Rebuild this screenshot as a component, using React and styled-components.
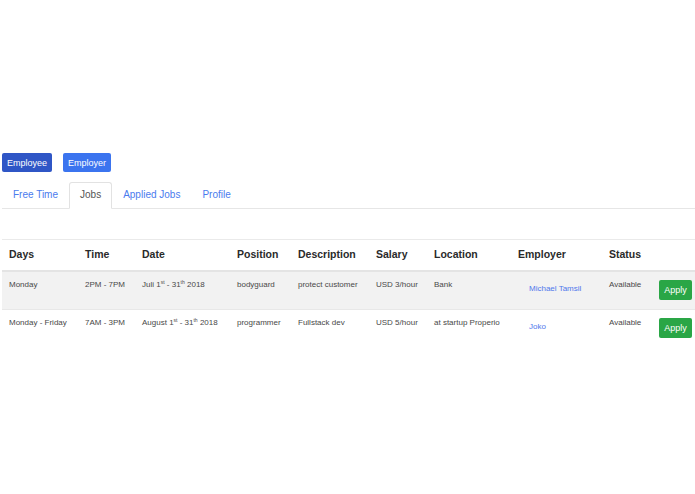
import React, { useState } from 'react';
import styled, { createGlobalStyle } from 'styled-components';

const GlobalStyle = createGlobalStyle`
  body {
    margin: 0;
    background: #fff;
    font-family: "Liberation Sans", Arial, sans-serif;
    color: #333;
  }
`;

const Page = styled.div`
  padding: 153px 0 0 2px;
`;

const RoleBar = styled.div`
  display: flex;
  gap: 11px;
`;

const RoleButton = styled.button`
  height: 19px;
  padding: 0 5px;
  border: none;
  border-radius: 2px;
  background: ${({ active }) => (active ? '#2f56c6' : '#3b74ef')};
  color: #fff;
  font-family: inherit;
  font-size: 9px;
  cursor: pointer;
`;

const Tabs = styled.div`
  display: flex;
  margin-top: 10px;
  border-bottom: 1px solid #e6e6e6;
  height: 26px;
`;

const Tab = styled.div`
  padding: 0 10px 2px;
  display: flex;
  align-items: center;
  font-size: 10px;
  color: ${({ active }) => (active ? '#555' : '#4a7bee')};
  border: 1px solid ${({ active }) => (active ? '#e2e2e2' : 'transparent')};
  border-bottom: ${({ active }) => (active ? '1px solid #fff' : 'none')};
  border-radius: 3px 3px 0 0;
  background: ${({ active }) => (active ? '#fff' : 'transparent')};
  margin-bottom: ${({ active }) => (active ? '-1px' : '0')};
  height: ${({ active }) => (active ? 27 : 26)}px;
  box-sizing: border-box;
  cursor: pointer;
`;

const Table = styled.table`
  margin-top: 30px;
  width: 693px;
  table-layout: fixed;
  border-collapse: collapse;
  border-top: 1px solid #eaeaea;
`;

const Th = styled.th`
  text-align: left;
  font-size: 10.5px;
  font-weight: bold;
  color: #2a2a2a;
  height: 27px;
  padding: 0 0 3px 7px;
  border-bottom: 2px solid #e4e4e4;
  vertical-align: middle;
`;

const Row = styled.tr`
  background: ${({ striped }) => (striped ? '#f2f2f2' : '#fff')};
  border-bottom: 1px solid ${({ last }) => (last ? 'transparent' : '#e8e8e8')};
  height: 38px;
`;

const Td = styled.td`
  font-size: 8px;
  color: #484848;
  padding: 8px 0 0 7px;
  vertical-align: top;
  white-space: nowrap;
  line-height: 10px;
`;

const EmployerLink = styled.a`
  display: inline-block;
  margin: 4px 0 0 11px;
  font-size: 8px;
  color: #4f78ec;
  text-decoration: none;
  cursor: pointer;
`;

const ApplyButton = styled.button`
  margin-top: 0;
  width: 33px;
  height: 20px;
  border: none;
  border-radius: 2px;
  background: #2aa646;
  color: #fff;
  font-family: inherit;
  font-size: 9px;
  padding: 0;
  cursor: pointer;
`;

const Sup = styled.sup`
  font-size: 5px;
  vertical-align: 3px;
  line-height: 0;
`;

const widths = [76, 57, 95, 61, 78, 58, 84, 91, 50, 43];
const headers = ['Days', 'Time', 'Date', 'Position', 'Description', 'Salary', 'Location', 'Employer', 'Status', ''];

const jobs = [
  {
    days: 'Monday',
    time: '2PM - 7PM',
    month: 'Juli',
    position: 'bodyguard',
    description: 'protect customer',
    salary: 'USD 3/hour',
    location: 'Bank',
    employer: 'Michael Tamsil',
    status: 'Available',
  },
  {
    days: 'Monday - Friday',
    time: '7AM - 3PM',
    month: 'August',
    position: 'programmer',
    description: 'Fullstack dev',
    salary: 'USD 5/hour',
    location: 'at startup Properio',
    employer: 'Joko',
    status: 'Available',
  },
];

const App = () => {
  const [role, setRole] = useState('employee');
  const [tab, setTab] = useState('Jobs');

  return (
    <Page>
      <GlobalStyle />
      <RoleBar>
        <RoleButton active={role === 'employee'} onClick={() => setRole('employee')}>
          Employee
        </RoleButton>
        <RoleButton active={role === 'employer'} onClick={() => setRole('employer')}>
          Employer
        </RoleButton>
      </RoleBar>

      <Tabs>
        {['Free Time', 'Jobs', 'Applied Jobs', 'Profile'].map(name => (
          <Tab key={name} active={tab === name} onClick={() => setTab(name)}>
            {name}
          </Tab>
        ))}
      </Tabs>

      <Table>
        <colgroup>
          {widths.map((w, i) => (
            <col key={i} style={{ width: w }} />
          ))}
        </colgroup>
        <thead>
          <tr>
            {headers.map((h, i) => (
              <Th key={i}>{h}</Th>
            ))}
          </tr>
        </thead>
        <tbody>
          {jobs.map((job, i) => (
            <Row key={i} striped={i % 2 === 0} last={i === jobs.length - 1}>
              <Td>{job.days}</Td>
              <Td>{job.time}</Td>
              <Td>
                {job.month} 1<Sup>st</Sup> - 31<Sup>th</Sup> 2018
              </Td>
              <Td>{job.position}</Td>
              <Td>{job.description}</Td>
              <Td>{job.salary}</Td>
              <Td>{job.location}</Td>
              <Td>
                <EmployerLink>{job.employer}</EmployerLink>
              </Td>
              <Td>{job.status}</Td>
              <Td>
                <ApplyButton>Apply</ApplyButton>
              </Td>
            </Row>
          ))}
        </tbody>
      </Table>
    </Page>
  );
};

export default App;
